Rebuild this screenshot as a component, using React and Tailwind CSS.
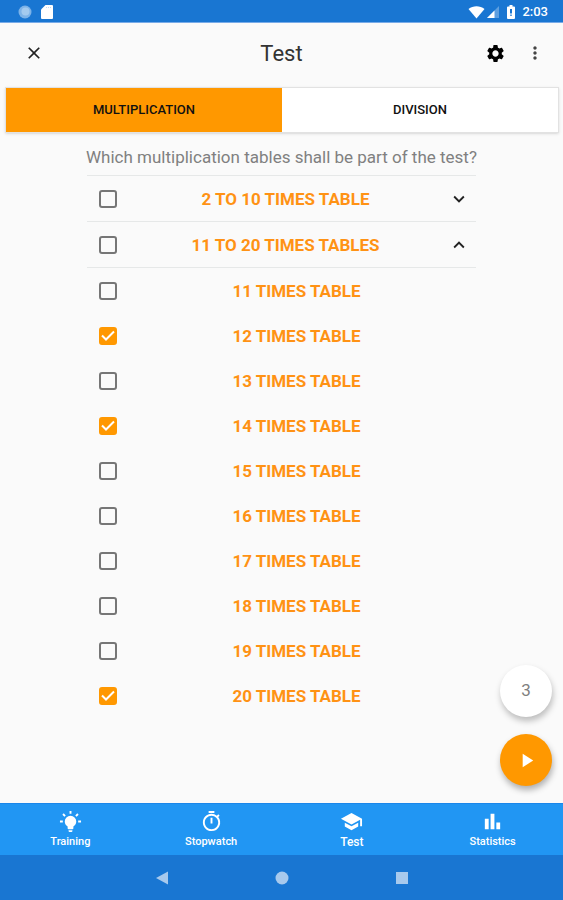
import { useState } from 'react'
import {
  MdClose,
  MdSettings,
  MdMoreVert,
  MdExpandMore,
  MdExpandLess,
  MdPlayArrow,
  MdOutlineTimer,
  MdSchool,
  MdBarChart,
} from 'react-icons/md'

const tables = [11, 12, 13, 14, 15, 16, 17, 18, 19, 20]

function BulbIcon({ className }) {
  return (
    <svg viewBox="0 0 24 24" fill="currentColor" className={className}>
      <path d="M12 6a6 6 0 0 1 6 6c0 2.22-1.21 4.16-3 5.2V19a1 1 0 0 1-1 1h-4a1 1 0 0 1-1-1v-1.800C7.210 16.160 6 14.220 6 12a6 6 0 0 1 6-6m2 15v1a1 1 0 0 1-1 1h-2a1 1 0 0 1-1-1v-1h4m6-10h3v2h-3v-2M1 11h3v2H1v-2M13 1v3h-2V1h2M4.920 3.500l2.130 2.140-1.420 1.410L3.500 4.930 4.920 3.500m12.030 2.130 2.120-2.130 1.430 1.430-2.130 2.120-1.420-1.420z" />
    </svg>
  )
}

const navItems = [
  { label: 'Training', Icon: BulbIcon },
  { label: 'Stopwatch', Icon: MdOutlineTimer },
  { label: 'Test', Icon: MdSchool },
  { label: 'Statistics', Icon: MdBarChart },
]

function StatusBar() {
  return (
    <div className="flex h-[23px] items-center justify-between border-b border-[#78abe8] bg-[#1976d2] pl-[18px] pr-[15px] pt-px text-white">
      <div className="flex items-center gap-2">
        <svg viewBox="0 0 14 14" className="size-[14px]">
          <circle cx="7" cy="7" r="6.500" fill="#7db3e8" />
          <circle cx="7.500" cy="6.500" r="4" fill="#a3caef" />
        </svg>
        <svg viewBox="0 0 14 16" className="h-4 w-[14px]">
          <path fill="#fff" d="M5.500 1H12a1 1 0 0 1 1 1v12a1 1 0 0 1-1 1H2a1 1 0 0 1-1-1V5.500z" />
          <path fill="#c4daf4" d="M6 3h1v1H6zM8 3h1v1H8zM10 3h1v1h-1z" />
        </svg>
      </div>
      <div className="flex items-center">
        <svg viewBox="0 0 17 14" className="h-[14px] w-[17px]">
          <path fill="#fff" d="M8.500 13.500.5 4C5 .2 12 .2 16.500 4z" />
        </svg>
        <svg viewBox="0 0 14 14" className="h-[14px] w-[14px]">
          <path fill="#5e9fe0" d="M14 1v12H2z" />
          <path fill="#fff" d="M9.500 5.500V13H2z" />
        </svg>
        <svg viewBox="0 0 10 14" className="ml-[7px] h-[14px] w-[10px]">
          <path fill="#fff" d="M3.500 0h3v1.500H8a1 1 0 0 1 1 1V13a1 1 0 0 1-1 1H2a1 1 0 0 1-1-1V2.500a1 1 0 0 1 1-1h1.500z" />
          <path fill="#1976d2" d="M4 4h2v4.500H4zM4.300 9.500h1.400V11H4.300z" />
        </svg>
        <span className="ml-[6px] text-[13px] font-medium">2:03</span>
      </div>
    </div>
  )
}

function CheckRow({ id, label, checked, onChange, children }) {
  return (
    <div className="flex h-[45px] items-center pl-3 pr-[6px]">
      <span className="relative flex size-[18px] shrink-0">
        <input
          id={id}
          type="checkbox"
          checked={checked}
          onChange={onChange}
          className="peer size-[18px] appearance-none rounded-[3px] border-2 border-[#767676] checked:border-[#ff9800] checked:bg-[#ff9800]"
        />
        <svg
          viewBox="0 0 18 18"
          className="pointer-events-none absolute inset-0 hidden size-[18px] peer-checked:block"
        >
          <path d="M3 8.500 7 12.500l8-8" fill="none" stroke="#fff" strokeWidth="2" />
        </svg>
      </span>
      <label htmlFor={id} className="ml-[6px] flex-1 pt-[2px] text-center text-[17px] font-bold text-[#ff9214]">
        {label}
      </label>
      {children}
    </div>
  )
}

export default function App() {
  const [tab, setTab] = useState('multiplication')
  const [selected, setSelected] = useState([12, 14, 20])
  const [groups, setGroups] = useState({ low: false, high: false })
  const [open, setOpen] = useState({ low: false, high: true })

  function toggleTable(n) {
    setSelected((prev) => (prev.includes(n) ? prev.filter((x) => x !== n) : [...prev, n]))
  }

  const tabClass = (name) =>
    name === tab ? 'flex-1 bg-[#ff9800]' : 'flex-1 bg-white'

  return (
    <div className="flex min-h-screen flex-col bg-[#fafafa] font-[Roboto,sans-serif]">
      <StatusBar />

      <header className="grid h-16 grid-cols-3 items-center px-[18px] pb-1">
        <button aria-label="Close" className="flex size-8 items-center justify-center text-[#222]">
          <MdClose className="size-5" />
        </button>
        <h1 className="text-center text-[22px] text-[#333]">Test</h1>
        <div className="flex items-center justify-end gap-[19px]">
          <button aria-label="Settings" className="text-black">
            <MdSettings className="size-[21px]" />
          </button>
          <button aria-label="More" className="text-[#444]">
            <MdMoreVert className="size-5" />
          </button>
        </div>
      </header>

      <main className="relative flex-1">
        <div className="ml-[5px] mr-1 flex h-[46px] border border-[#e2e2e2] text-[13px] font-medium text-[#111] shadow-sm">
          <button className={tabClass('multiplication')} onClick={() => setTab('multiplication')}>
            MULTIPLICATION
          </button>
          <button className={tabClass('division')} onClick={() => setTab('division')}>
            DIVISION
          </button>
        </div>

        <p className="pb-[6px] pt-3 text-center text-[17px] leading-6 text-[#808080]">
          Which {tab} tables shall be part of the test?
        </p>

        <div className="mx-auto max-w-[389px]">
          <div className="border-y border-[#e6e8e8]">
            <CheckRow
              id="group-low"
              label="2 TO 10 TIMES TABLE"
              checked={groups.low}
              onChange={() => setGroups({ ...groups, low: !groups.low })}
            >
              <button aria-label="Expand" onClick={() => setOpen({ ...open, low: !open.low })}>
                <MdExpandMore className="size-[22px] text-[#222]" />
              </button>
            </CheckRow>
          </div>
          <div className="border-b border-[#e6e8e8]">
            <CheckRow
              id="group-high"
              label="11 TO 20 TIMES TABLES"
              checked={groups.high}
              onChange={() => setGroups({ ...groups, high: !groups.high })}
            >
              <button aria-label="Collapse" onClick={() => setOpen({ ...open, high: !open.high })}>
                <MdExpandLess className="size-[22px] text-[#222]" />
              </button>
            </CheckRow>
          </div>
          {open.high &&
            tables.map((n) => (
              <CheckRow
                key={n}
                id={`table-${n}`}
                label={`${n} TIMES TABLE`}
                checked={selected.includes(n)}
                onChange={() => toggleTable(n)}
              />
            ))}
        </div>

        <div className="absolute bottom-[17px] right-[11px] flex flex-col gap-[17px]">
          <div className="flex size-[52px] items-center justify-center rounded-full bg-white text-[17px] text-[#808080] shadow-[1px_4px_6px_rgba(0,0,0,0.25)]">
            {selected.length}
          </div>
          <button
            aria-label="Start test"
            className="flex size-[52px] items-center justify-center rounded-full bg-[#ff9800] text-white shadow-[1px_4px_6px_rgba(0,0,0,0.3)]"
          >
            <MdPlayArrow className="size-[23px]" />
          </button>
        </div>
      </main>

      <nav className="grid h-[52px] grid-cols-4 border-t border-[#1a86ea] bg-[#2196f3] text-white">
        {navItems.map(({ label, Icon }) => (
          <a key={label} href="#" className="flex flex-col items-center pt-[6px]">
            <Icon className="size-[23px]" />
            <span
              className={
                label === 'Test'
                  ? 'text-[12px] font-medium leading-[18px]'
                  : 'text-[11px] font-medium leading-[18px]'
              }
            >
              {label}
            </span>
          </a>
        ))}
      </nav>

      <div className="flex h-[45px] items-center justify-center gap-[106px] bg-[#1976d2] text-[#a7c9ed]">
        <button aria-label="Back">
          <svg viewBox="0 0 14 14" fill="currentColor" className="size-[14px]">
            <path d="M13 .5v13L1 7z" />
          </svg>
        </button>
        <button aria-label="Home">
          <svg viewBox="0 0 14 14" fill="currentColor" className="size-[14px]">
            <circle cx="7" cy="7" r="6.500" />
          </svg>
        </button>
        <button aria-label="Recents">
          <svg viewBox="0 0 14 14" fill="currentColor" className="size-[14px]">
            <path d="M1 1h12v12H1z" />
          </svg>
        </button>
      </div>
    </div>
  )
}
